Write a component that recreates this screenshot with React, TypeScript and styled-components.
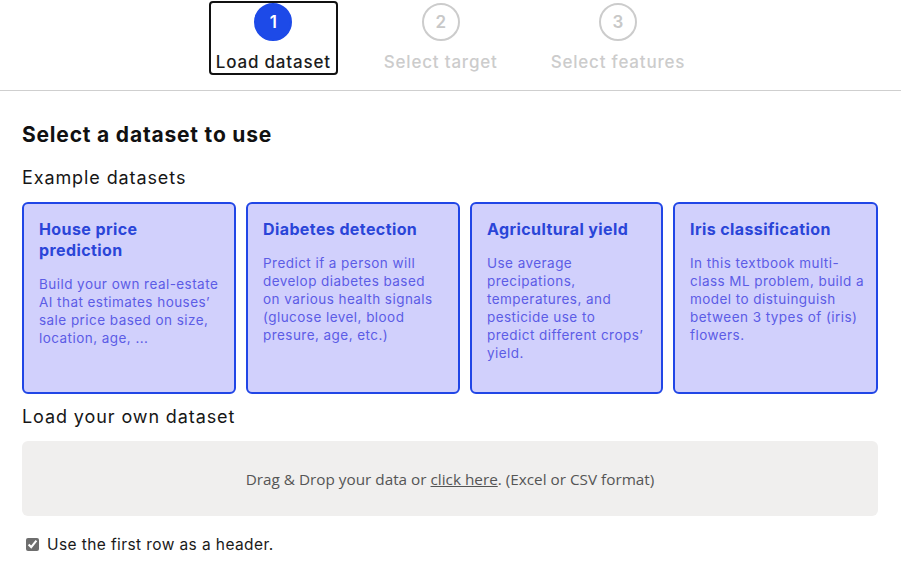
import React from 'react';
import styled, { createGlobalStyle } from 'styled-components';

const GlobalStyle = createGlobalStyle`
  body {
    margin: 0;
    background: #ffffff;
    font-family: Inter, "Noto Sans", sans-serif;
    color: #111111;
  }
`;

const Stepper = styled.nav`
  display: flex;
  justify-content: center;
  gap: 39px;
  padding-top: 1px;
  border-bottom: 1px solid #cfcfcf;
  height: 91px;
  box-sizing: border-box;
`;

const Step = styled.div<{ $active?: boolean }>`
  display: flex;
  flex-direction: column;
  align-items: center;
  gap: 11px;
  height: 74px;
  box-sizing: border-box;
  padding: 1px 5px 0;
  border: 2px solid ${(p) => (p.$active ? '#111111' : 'transparent')};
  border-radius: 4px;
  color: ${(p) => (p.$active ? '#1c1c1c' : '#cccccc')};
`;

const StepNumber = styled.div<{ $active?: boolean }>`
  width: 38px;
  height: 38px;
  box-sizing: border-box;
  border-radius: 50%;
  display: flex;
  align-items: center;
  justify-content: center;
  font-size: 17px;
  font-weight: 600;
  margin-top: -1px;
  background: ${(p) => (p.$active ? '#1d4ae8' : 'transparent')};
  border: 2px solid ${(p) => (p.$active ? '#1d4ae8' : '#cccccc')};
  color: ${(p) => (p.$active ? '#ffffff' : '#c8c8c8')};
`;

const StepLabel = styled.span`
  font-size: 17px;
  font-weight: 500;
  line-height: 20px;
  letter-spacing: 0.8px;
  white-space: nowrap;
`;

const Content = styled.main`
  padding: 30px 23px 0 22px;
`;

const Title = styled.h2`
  margin: 0 0 18px;
  font-size: 21px;
  font-weight: 700;
  line-height: 28px;
  letter-spacing: 0.8px;
  color: #111111;
`;

const SectionLabel = styled.h3`
  margin: 0 0 13px;
  font-size: 18px;
  font-weight: 400;
  line-height: 22px;
  letter-spacing: 0.9px;
  color: #161616;
`;

const CardRow = styled.div`
  display: flex;
  gap: 10px;
  margin-bottom: 12px;
`;

const Card = styled.button<{ $width: number }>`
  flex: 0 0 ${(p) => p.$width}px;
  height: 192px;
  box-sizing: border-box;
  text-align: left;
  padding: 15px 6px 0 15px;
  background: #d1d0fc;
  border: 2px solid #2146e6;
  border-radius: 6px;
  font-family: inherit;
  display: flex;
  flex-direction: column;
  cursor: pointer;
`;

const CardTitle = styled.div`
  font-size: 16px;
  font-weight: 700;
  line-height: 21px;
  letter-spacing: 0.4px;
  color: #2a45d8;
  margin-bottom: 14px;
  white-space: pre-line;
`;

const CardText = styled.div`
  font-size: 13.5px;
  line-height: 18px;
  letter-spacing: 0.45px;
  color: #5c5ce6;
  white-space: pre-line;
`;

const DropZone = styled.div`
  margin-top: 13px;
  height: 75px;
  border-radius: 6px;
  background: #f0efee;
  display: flex;
  align-items: center;
  justify-content: center;
  font-family: "Open Sans", "Noto Sans", sans-serif;
  font-size: 15.3px;
  color: #555555;
`;

const DropLink = styled.a`
  color: #555555;
  text-decoration: underline;
  cursor: pointer;
`;

const CheckRow = styled.label`
  display: flex;
  align-items: center;
  gap: 8px;
  margin-top: 19px;
  padding-left: 4px;
  font-size: 15.5px;
  letter-spacing: 0.4px;
  color: #1a1a1a;
`;

const CheckBox = styled.input`
  margin: 0;
  width: 13px;
  height: 13px;
  accent-color: #6e6e6e;
`;

const steps = ['Load dataset', 'Select target', 'Select features'];

// line breaks follow the original card layout
const datasets = [
  {
    title: 'House price\nprediction',
    text: 'Build your own real-estate\nAI that estimates houses’\nsale price based on size,\nlocation, age, ...',
    width: 214,
  },
  {
    title: 'Diabetes detection',
    text: 'Predict if a person will\ndevelop diabetes based\non various health signals\n(glucose level, blood\npresure, age, etc.)',
    width: 214,
  },
  {
    title: 'Agricultural yield',
    text: 'Use average\nprecipations,\ntemperatures, and\npesticide use to\npredict different crops’\nyield.',
    width: 193,
  },
  {
    title: 'Iris classification',
    text: 'In this textbook multi-\nclass ML problem, build a\nmodel to distuinguish\nbetween 3 types of (iris)\nflowers.',
    width: 205,
  },
];

export default function App() {
  return (
    <>
      <GlobalStyle />
      <Stepper>
        {steps.map((s, i) => (
          <Step key={s} $active={i === 0}>
            <StepNumber $active={i === 0}>{i + 1}</StepNumber>
            <StepLabel>{s}</StepLabel>
          </Step>
        ))}
      </Stepper>
      <Content>
        <Title>Select a dataset to use</Title>
        <SectionLabel>Example datasets</SectionLabel>
        <CardRow>
          {datasets.map((d) => (
            <Card key={d.title} $width={d.width}>
              <CardTitle>{d.title}</CardTitle>
              <CardText>{d.text}</CardText>
            </Card>
          ))}
        </CardRow>
        <SectionLabel>Load your own dataset</SectionLabel>
        <DropZone>
          <span>
            Drag &amp; Drop your data or <DropLink>click here</DropLink>. (Excel or CSV format)
          </span>
        </DropZone>
        <CheckRow>
          <CheckBox type="checkbox" defaultChecked />
          Use the first row as a header.
        </CheckRow>
      </Content>
    </>
  );
}
